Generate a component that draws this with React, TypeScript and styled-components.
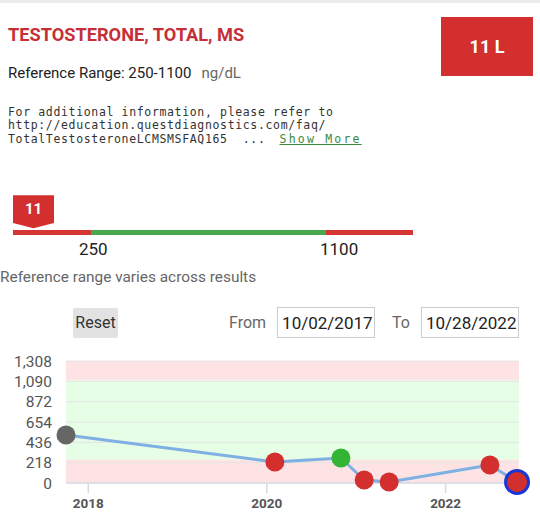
import React from 'react';
import styled, { createGlobalStyle } from 'styled-components';

const GlobalStyle = createGlobalStyle`
  html, body {
    margin: 0;
    padding: 0;
    background: #fff;
  }
  body {
    font-family: Roboto, "Noto Sans", "Liberation Sans", sans-serif;
    color: #222;
  }
`;

const Page = styled.div`
  width: 540px;
  height: 518px;
  overflow: hidden;
`;

const TopStrip = styled.div`
  height: 3px;
  background: #ebebeb;
`;

const Header = styled.div`
  display: flex;
  justify-content: space-between;
  align-items: flex-start;
  padding: 0 7px 0 8px;
`;

const Title = styled.h1`
  margin: 21px 0 0;
  font-size: 18.2px;
  line-height: 21px;
  font-weight: 700;
  color: #c62f37;
`;

const RangeLine = styled.div`
  margin-top: 19px;
  font-size: 15px;
  line-height: 18px;
  color: #222;
`;

const Unit = styled.span`
  margin-left: 10px;
  color: #666;
`;

const ValueBadge = styled.div`
  margin-top: 14px;
  width: 92px;
  height: 59px;
  display: flex;
  align-items: center;
  justify-content: center;
  background: #d32f2f;
  color: #fff;
  font-size: 18px;
  font-weight: 700;
`;

const Note = styled.div`
  margin-top: 24px;
  padding-left: 8px;
  font-family: "DejaVu Sans Mono", "Liberation Mono", monospace;
  font-size: 11.5px;
  letter-spacing: 0.65px;
  line-height: 13.4px;
  color: #333;
  white-space: pre;
`;

const NoteLine = styled.div`
  display: flex;
  align-items: baseline;
  height: 13.4px;
`;

const ShowMore = styled.a`
  margin-left: 14px;
  font-size: 11.5px;
  letter-spacing: 2.2px;
  color: #3b8a3b;
  text-decoration: underline;
  cursor: pointer;
`;

const Scale = styled.div`
  margin-top: 49px;
  padding-left: 13px;
`;

const Marker = styled.div`
  width: 41px;
  height: 34px;
  box-sizing: border-box;
  padding-bottom: 6px;
  display: flex;
  align-items: center;
  justify-content: center;
  background: #d32f2f;
  color: #fff;
  font-size: 15px;
  font-weight: 700;
  clip-path: polygon(0 0, 100% 0, 100% 82%, 50% 97%, 0 82%);
`;

const Bar = styled.div`
  display: flex;
  width: 400px;
  height: 5px;
  margin-top: 1px;
`;

const Segment = styled.div<{ $w: number; $ok?: boolean }>`
  width: ${(p) => p.$w}px;
  background: ${(p) => (p.$ok ? '#46a84a' : '#d63535')};
`;

const TickRow = styled.div`
  display: flex;
  margin-top: 4px;
`;

const Tick = styled.span<{ $gap: number }>`
  width: 40px;
  margin-left: ${(p) => p.$gap}px;
  font-size: 17px;
  line-height: 20px;
  color: #222;
`;

const Varies = styled.div`
  margin-top: 9px;
  font-size: 15.4px;
  line-height: 18px;
  color: #666;
`;

const Controls = styled.div`
  display: flex;
  align-items: center;
  height: 31px;
  margin-top: 21px;
  padding: 0 21px 0 73px;
`;

const ResetButton = styled.button`
  width: 45px;
  height: 30px;
  padding: 0;
  border: none;
  border-radius: 2px;
  background: #e2e2e2;
  font-family: inherit;
  font-size: 16px;
  color: #333;
`;

const DateGroup = styled.div`
  display: flex;
  align-items: center;
  margin-left: auto;
`;

const DateLabel = styled.span<{ $before?: number }>`
  margin: 0 11px 0 ${(p) => p.$before ?? 0}px;
  font-size: 16px;
  color: #666;
`;

const DateInput = styled.div`
  width: 98px;
  height: 31px;
  box-sizing: border-box;
  padding-left: 4px;
  display: flex;
  align-items: center;
  border: 1px solid #ccc;
  font-size: 17px;
  color: #222;
`;

const ChartSvg = styled.svg`
  display: block;
  margin-top: 1px;
`;

type Result = { date: string; value: number; color: string; current?: boolean };

const results: Result[] = [
  { date: '2017-10-02', value: 515, color: '#666666' },
  { date: '2020-02-03', value: 225, color: '#d32f2f' },
  { date: '2020-10-30', value: 268, color: '#34b434' },
  { date: '2021-02-02', value: 32, color: '#d32f2f' },
  { date: '2021-05-15', value: 11, color: '#d32f2f' },
  { date: '2022-07-01', value: 193, color: '#d32f2f' },
  { date: '2022-10-20', value: 11, color: '#d32f2f', current: true },
];

const LEFT = 66;
const RIGHT = 519;
const TOP = 22;
const BOTTOM = 144;
const MAX = 1308;
const STEP = 218;
const START = Date.parse('2017-10-02');
const END = Date.parse('2022-10-28');

const xOf = (d: string) => LEFT + ((Date.parse(d) - START) / (END - START)) * (RIGHT - LEFT);
const yOf = (v: number) => BOTTOM - (v / MAX) * (BOTTOM - TOP);

function TrendChart() {
  const steps = Array.from({ length: MAX / STEP + 1 }, (_, i) => i * STEP);
  const years = [2018, 2020, 2022];
  const points = results.map((r) => `${xOf(r.date)},${yOf(r.value)}`).join(' ');

  return (
    <ChartSvg width={540} height={179} viewBox="0 0 540 179">
      <rect x={LEFT} y={TOP} width={RIGHT - LEFT} height={yOf(1100) - TOP} fill="#fde3e3" />
      <rect x={LEFT} y={yOf(1100)} width={RIGHT - LEFT} height={yOf(250) - yOf(1100)} fill="#e6fde6" />
      <rect x={LEFT} y={yOf(250)} width={RIGHT - LEFT} height={BOTTOM - yOf(250)} fill="#fde3e3" />
      {steps.map((v) => (
        <g key={v}>
          <line
            x1={LEFT}
            x2={RIGHT}
            y1={yOf(v)}
            y2={yOf(v)}
            stroke={v === 0 ? '#d5d9e4' : '#e4e4e4'}
            strokeWidth={v === 0 ? 1.5 : 1}
          />
          <text
            x={52}
            y={yOf(v) + 5.5}
            textAnchor="end"
            fontSize="15.5"
            fill="#555"
            fontFamily="Roboto, sans-serif"
          >
            {v.toLocaleString('en-US')}
          </text>
        </g>
      ))}
      {years.map((y) => {
        const x = xOf(`${y}-01-01`);
        return (
          <g key={y}>
            <line x1={x} x2={x} y1={BOTTOM + 1} y2={BOTTOM + 10} stroke="#d5d9e4" strokeWidth={1.5} />
            <text
              x={x}
              y={169}
              textAnchor="middle"
              fontSize="13.5"
              fontWeight="700"
              fill="#555"
              fontFamily="Roboto, sans-serif"
            >
              {y}
            </text>
          </g>
        );
      })}
      <polyline points={points} fill="none" stroke="#7eb0e3" strokeWidth={3} strokeLinejoin="round" />
      {results.map((r) =>
        r.current ? (
          <circle key={r.date} cx={xOf(r.date)} cy={yOf(r.value)} r={11.5} fill={r.color} stroke="#1a37d4" strokeWidth={3} />
        ) : (
          <circle key={r.date} cx={xOf(r.date)} cy={yOf(r.value)} r={9.5} fill={r.color} />
        )
      )}
    </ChartSvg>
  );
}

export default function App() {
  return (
    <Page>
      <GlobalStyle />
      <TopStrip />
      <Header>
        <div>
          <Title>TESTOSTERONE, TOTAL, MS</Title>
          <RangeLine>
            Reference Range: 250-1100
            <Unit>ng/dL</Unit>
          </RangeLine>
        </div>
        <ValueBadge>11 L</ValueBadge>
      </Header>
      <Note>
        <NoteLine>For additional information, please refer to</NoteLine>
        <NoteLine>http://education.questdiagnostics.com/faq/</NoteLine>
        <NoteLine>
          <span>TotalTestosteroneLCMSMSFAQ165  ...</span>
          <ShowMore>Show More</ShowMore>
        </NoteLine>
      </Note>
      <Scale>
        <Marker>11</Marker>
        <Bar>
          <Segment $w={78} />
          <Segment $w={235} $ok />
          <Segment $w={87} />
        </Bar>
        <TickRow>
          <Tick $gap={66}>250</Tick>
          <Tick $gap={201}>1100</Tick>
        </TickRow>
      </Scale>
      <Varies>Reference range varies across results</Varies>
      <Controls>
        <ResetButton>Reset</ResetButton>
        <DateGroup>
          <DateLabel>From</DateLabel>
          <DateInput>10/02/2017</DateInput>
          <DateLabel $before={17}>To</DateLabel>
          <DateInput>10/28/2022</DateInput>
        </DateGroup>
      </Controls>
      <TrendChart />
    </Page>
  );
}
